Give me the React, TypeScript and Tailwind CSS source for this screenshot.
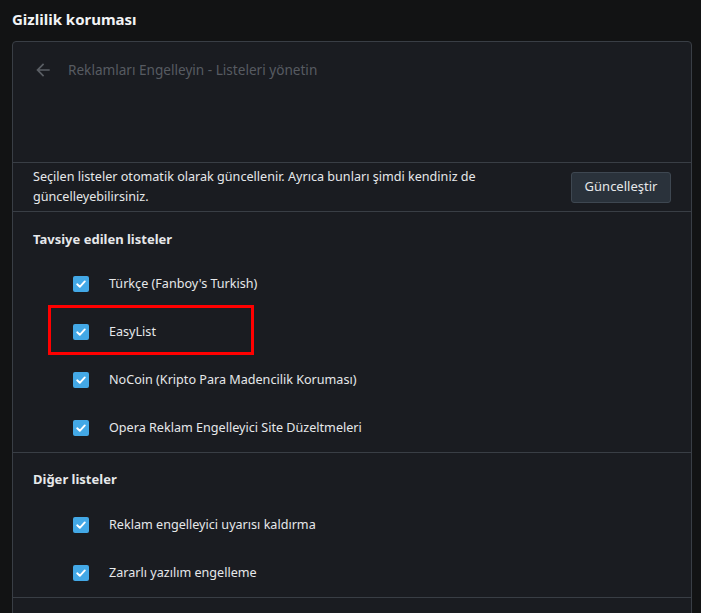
import React from "react";

const font = { fontFamily: '"Noto Sans", "Open Sans", sans-serif' };

function Check() {
  return (
    <span className="flex h-4 w-4 shrink-0 items-center justify-center rounded-[2px] bg-[#43a8e6]">
      <svg width="12" height="12" viewBox="0 0 12 12" fill="none">
        <polyline points="2.2,6.3 4.8,8.8 9.8,3.4" stroke="#ffffff" strokeWidth="1.9" strokeLinecap="round" strokeLinejoin="round" />
      </svg>
    </span>
  );
}

function Item({ label, boxed }: { label: string; boxed?: boolean }) {
  return (
    <div className="relative flex h-12 items-center gap-5 pl-[60px]">
      <Check />
      <span className="text-[12.6px] text-[#e6e8ea]">{label}</span>
      {boxed && (
        <div className="pointer-events-none absolute left-[35px] top-[-3px] h-[50px] w-[206px] border-[3px] border-[#ff0000]" />
      )}
    </div>
  );
}

export default function App() {
  return (
    <div className="min-h-[613px] overflow-hidden bg-[#121314] px-3 pt-[9px]" style={font}>
      <div className="mb-3 h-5 text-[15px] font-bold leading-5 text-[#f2f3f5]">Gizlilik koruması</div>
      <div className="w-[680px] rounded-[4px] border border-[#393e45] bg-[#1a1c21]">
        <div className="h-[120px] px-5 pt-[17px]">
          <div className="flex h-[22px] items-center gap-[15px]">
            <svg width="20" height="20" viewBox="0 0 24 24">
              <path d="M20 11H7.83l5.59-5.59L12 4l-8 8 8 8 1.41-1.41L7.83 13H20v-2z" fill="#5a5e64" />
            </svg>
            <span className="text-[13.6px] text-[#575b61]">Reklamları Engelleyin - Listeleri yönetin</span>
          </div>
        </div>
        <div className="flex items-center justify-between border-t border-[#393e45] py-1 pl-5 pr-5">
          <p className="w-[470px] text-[12.6px] leading-5 text-[#e6e8ea]">
            Seçilen listeler otomatik olarak güncellenir. Ayrıca bunları şimdi kendiniz de güncelleyebilirsiniz.
          </p>
          <button className="h-[31px] w-[100px] rounded-[3px] border border-[#3e4751] bg-[#2a323b] text-[13px] text-[#e6e8ea]">
            Güncelleştir
          </button>
        </div>
        <div className="border-t border-[#393e45] pt-[17px]">
          <div className="h-5 px-5 text-[13px] font-bold leading-5 text-[#e6e8ea]">Tavsiye edilen listeler</div>
          <div className="mt-[11px]">
            <Item label="Türkçe (Fanboy's Turkish)" />
            <Item label="EasyList" boxed />
            <Item label="NoCoin (Kripto Para Madencilik Koruması)" />
            <Item label="Opera Reklam Engelleyici Site Düzeltmeleri" />
          </div>
        </div>
        <div className="border-t border-[#393e45] pt-4">
          <div className="h-5 px-5 text-[13px] font-bold leading-5 text-[#e6e8ea]">Diğer listeler</div>
          <div className="mt-[12px]">
            <Item label="Reklam engelleyici uyarısı kaldırma" />
            <Item label="Zararlı yazılım engelleme" />
          </div>
        </div>
        <div className="h-[60px] border-t border-[#393e45]" />
      </div>
    </div>
  );
}
